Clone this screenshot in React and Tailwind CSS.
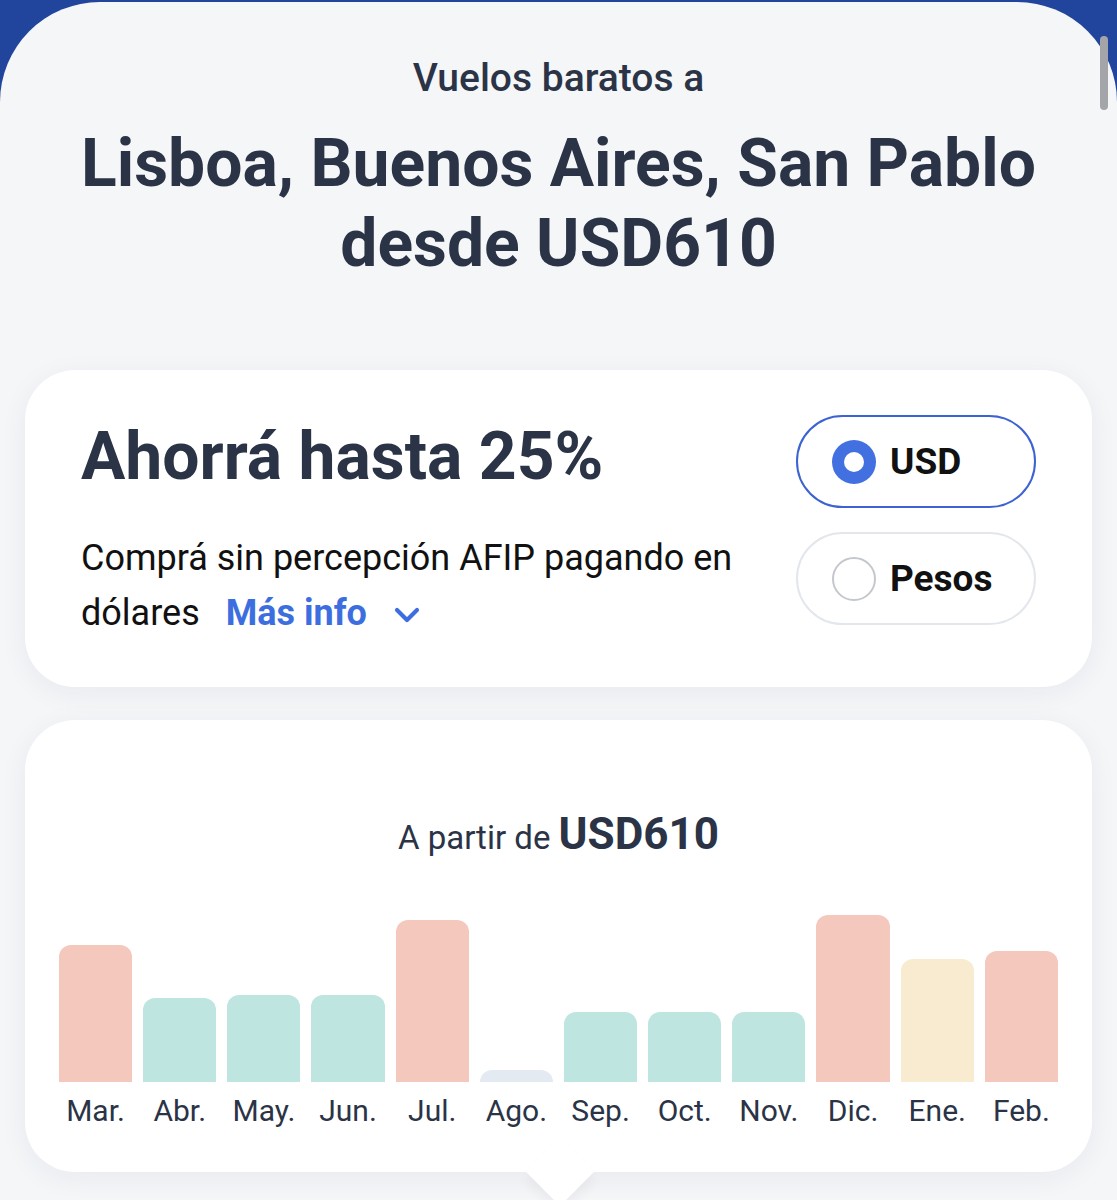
import { ChevronDown } from 'lucide-react'

const months = [
  { label: 'Mar.', top: 945, color: 'bg-[#f4c8bd]' },
  { label: 'Abr.', top: 998, color: 'bg-[#bee5df]' },
  { label: 'May.', top: 995, color: 'bg-[#bee5df]' },
  { label: 'Jun.', top: 995, color: 'bg-[#bee5df]' },
  { label: 'Jul.', top: 920, color: 'bg-[#f4c8bd]' },
  { label: 'Ago.', top: 1070, color: 'bg-[#e4eaf2]' },
  { label: 'Sep.', top: 1012, color: 'bg-[#bee5df]' },
  { label: 'Oct.', top: 1012, color: 'bg-[#bee5df]' },
  { label: 'Nov.', top: 1012, color: 'bg-[#bee5df]' },
  { label: 'Dic.', top: 915, color: 'bg-[#f4c8bd]' },
  { label: 'Ene.', top: 959, color: 'bg-[#f9ebcf]' },
  { label: 'Feb.', top: 951, color: 'bg-[#f4c8bd]' },
]

const BASE = 1082

function Radio({ label, checked }) {
  return (
    <div
      className={
        'flex h-[93px] w-[240px] items-center gap-[14px] rounded-full bg-white pl-[34px] ' +
        (checked ? 'border-[2.5px] border-[#3d63d2]' : 'border-2 border-[#e3e7ec]')
      }
    >
      {checked ? (
        <span className="flex h-[44px] w-[44px] items-center justify-center rounded-full bg-[#4270e0]">
          <span className="h-[20px] w-[20px] rounded-full bg-white" />
        </span>
      ) : (
        <span className="h-[44px] w-[44px] rounded-full border-2 border-[#c4c8cd]" />
      )}
      <span className="text-[37px] font-bold text-[#111]">{label}</span>
    </div>
  )
}

export default function App() {
  return (
    <div className="min-h-[1200px] bg-[#21449c] pt-[2px] font-['Roboto',sans-serif]">
      <div className="relative min-h-[1198px] rounded-t-[100px] bg-[#f5f6f8] px-[25px] pb-[40px]">
        {/* scroll indicator */}
        <div className="absolute right-[9px] top-[34px] h-[74px] w-[8px] rounded-full bg-[#a3a5a8]" />

        <p className="pt-[53px] text-center text-[39px] font-medium leading-[46px] text-[#2b3446]">Vuelos baratos a</p>
        <h1 className="mx-auto mt-[23px] max-w-[1040px] text-center text-[66px] font-bold leading-[80px] text-[#2b3446]">
          Lisboa, Buenos Aires, San Pablo desde USD610
        </h1>

        <section className="mt-[86px] flex items-start justify-between rounded-[50px] bg-white px-[56px] pb-[46px] pt-[47px] shadow-[0_6px_28px_rgba(30,40,60,0.06)]">
          <div>
            <h2 className="text-[66px] font-bold leading-[80px] text-[#2b3446]">Ahorrá hasta 25%</h2>
            <div className="mt-[34px] text-[36px] leading-[55px] text-[#111]">
              <p>Comprá sin percepción AFIP pagando en</p>
              <p className="flex items-center">
                <span>dólares</span>
                <span className="ml-[26px] font-bold text-[#3d6ee0]">Más info</span>
                <ChevronDown size={40} strokeWidth={2.5} className="ml-[20px] mt-[2px] text-[#3d6ee0]" />
              </p>
            </div>
          </div>
          <div className="-mt-[2px] flex flex-col gap-[24px]">
            <Radio label="USD" checked />
            <Radio label="Pesos" />
          </div>
        </section>

        <section className="relative mt-[33px] rounded-[50px] bg-white px-[34px] pb-[43px] pt-[88px] shadow-[0_6px_28px_rgba(30,40,60,0.06)]">
          <p className="text-center leading-[52px] text-[#2b3446]">
            <span className="text-[33px]">A partir de </span>
            <span className="text-[44px] font-bold">USD610</span>
          </p>
          <div className="mt-[42px] grid grid-cols-12 gap-x-[11px]">
            {months.map((m) => (
              <div key={m.label} className="flex flex-col items-center">
                <div className="flex h-[170px] w-full items-end">
                  <div className={'w-full rounded-t-[12px] ' + m.color} style={{ height: BASE - m.top }} />
                </div>
                <span className="mt-[11px] text-[30px] leading-[36px] text-[#2b3446]">{m.label}</span>
              </div>
            ))}
          </div>
          <div className="absolute -bottom-[24px] left-[511px] h-[48px] w-[48px] rotate-45 bg-white shadow-[6px_6px_12px_rgba(30,40,60,0.05)]" />
        </section>
      </div>
    </div>
  )
}
